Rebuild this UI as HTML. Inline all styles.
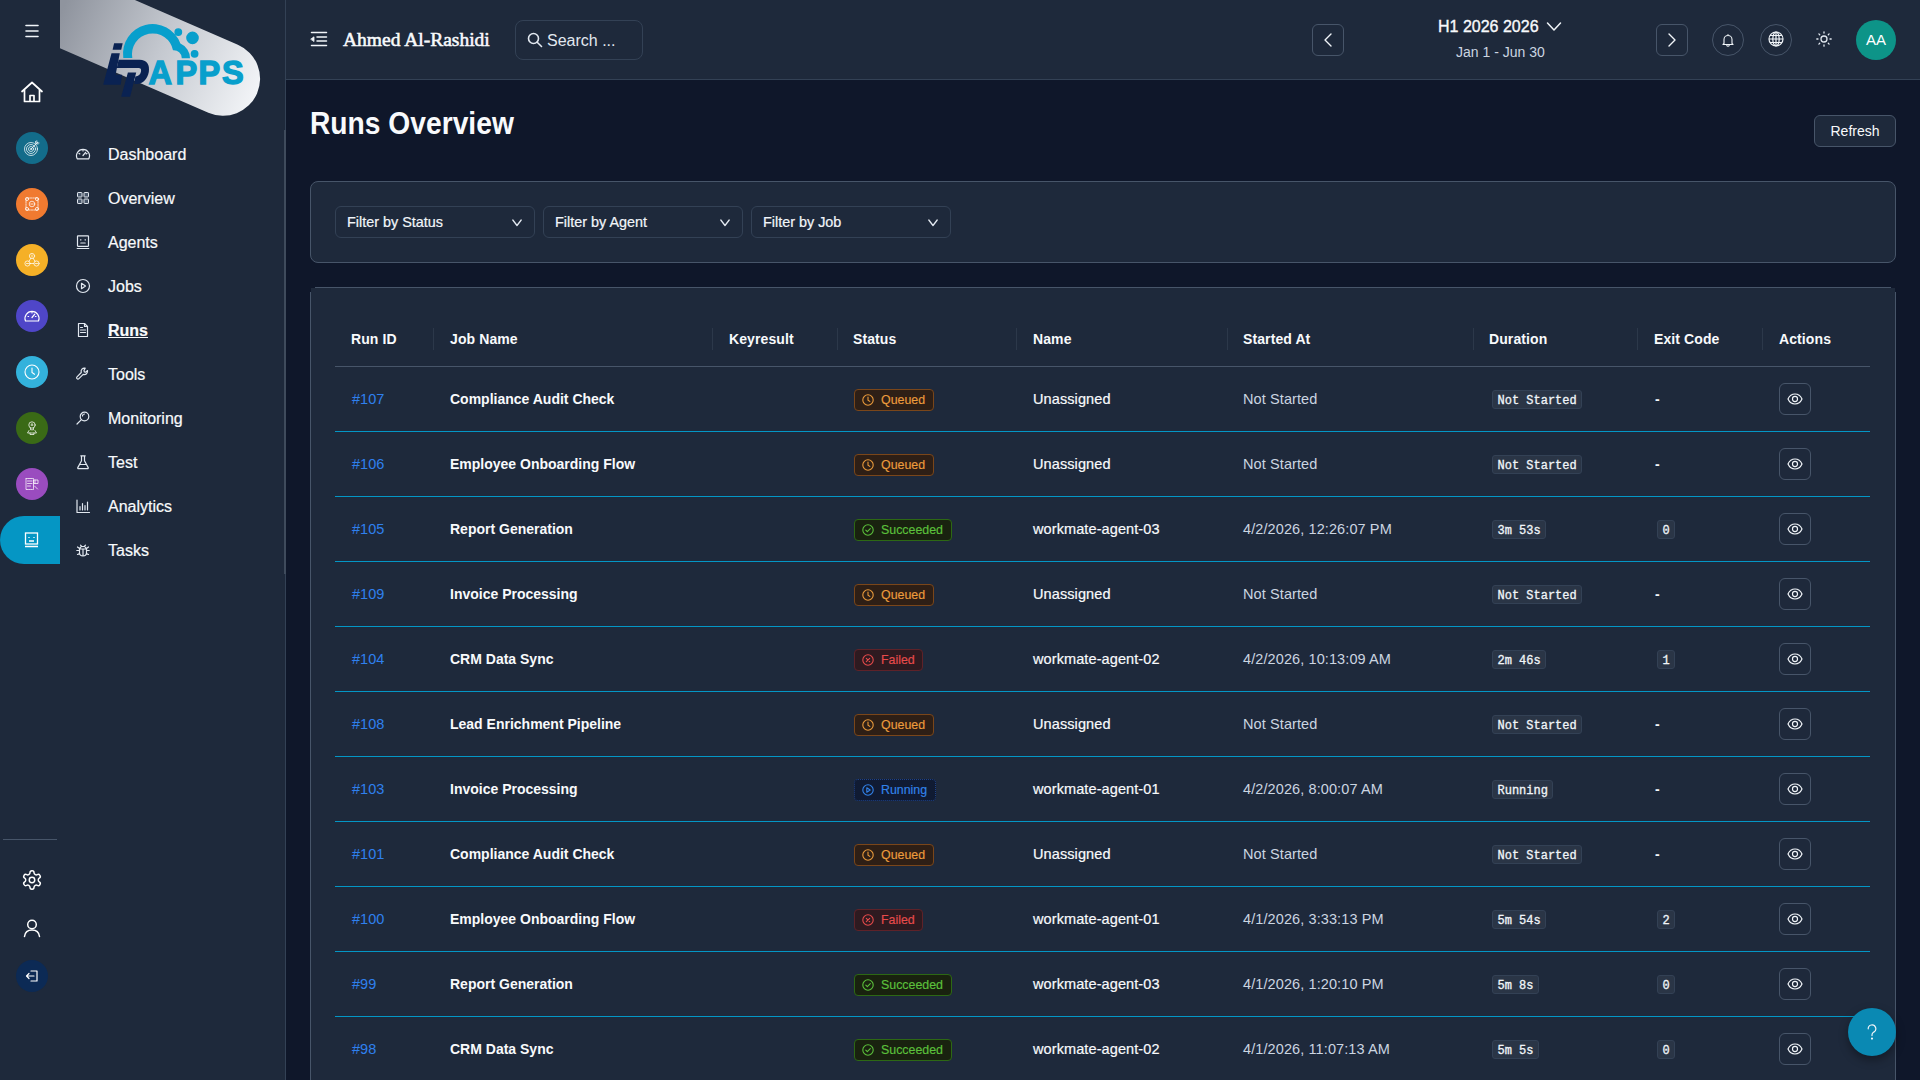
<!DOCTYPE html>
<html><head><meta charset="utf-8">
<style>
*{box-sizing:border-box;margin:0;padding:0}
html,body{width:1920px;height:1080px;overflow:hidden;background:#0f172a;font-family:"Liberation Sans",sans-serif;color:#f1f5f9}
.abs{position:absolute}
#rail{position:absolute;left:0;top:0;width:60px;height:1080px;background:#1e293b}
#side{position:absolute;left:60px;top:0;width:226px;height:1080px;background:#1e293b;border-right:1px solid #334155}
#hdr{position:absolute;left:286px;top:0;width:1634px;height:80px;background:#1e293b;border-bottom:1px solid #334155}
.circ{position:absolute;left:16px;width:32px;height:32px;border-radius:50%}
.circ svg{position:absolute;left:8px;top:8px}
.nav{position:absolute;left:108px;font-size:16px;line-height:22px;color:#f8fafc;-webkit-text-stroke:0.2px #f8fafc}
.navi{position:absolute;left:75px}
.btn32{position:absolute;width:32px;height:32px;border:1px solid #475569;border-radius:6px}
.card{position:absolute;background:#1e293b;border:1px solid #475569;border-radius:8px}
.sel{position:absolute;top:206px;width:200px;height:32px;border:1px solid #334155;border-radius:6px;background:#1e293b;font-size:14.4px;line-height:30px;padding-left:11px;color:#f1f5f9;-webkit-text-stroke:0.2px #f1f5f9}
.sel svg{position:absolute;right:10px;top:9px}
.th{position:absolute;top:330px;font-size:14px;font-weight:bold;line-height:18px;color:#f8fafc;letter-spacing:0.1px}
.sep{position:absolute;top:328px;width:1px;height:22px;background:#2c384a}
.row{position:absolute;left:335px;width:1535px;height:65px;border-bottom:1px solid #0396c5}
.c{position:absolute;top:23px;font-size:14px;line-height:18px;white-space:nowrap}
.rid{left:17px;color:#2f80ee;font-size:14.5px}
.job{left:115px;font-weight:bold;color:#f8fafc}
.nm{left:698px;color:#f8fafc;font-size:14.5px;letter-spacing:0.1px;-webkit-text-stroke:0.2px #f8fafc}
.st{left:908px;color:#cbd5e1;font-size:14.5px;letter-spacing:0.1px}
.badge{position:absolute;left:519px;top:22px;height:22px;border-radius:4px;border:1px solid;font-size:12.4px;line-height:20px;padding:0 7.5px 0 26px;-webkit-text-stroke:0.15px currentColor}
.badge svg{position:absolute;left:7px;top:4px}
.q{background:#2e1f16;border-color:#7a461a;color:#eb9b3c}
.s{background:#19220f;border-color:#2d6814;color:#5cc03c}
.f{background:#2e1a20;border-color:#5e2229;color:#e64b4b}
.r{background:#101b33;border-color:#1f4287;border-style:dotted;color:#3283ea}
.code{position:absolute;top:23px;height:19px;border-radius:3px;background:#2a3546;border:1px solid #334155;font-family:"Liberation Mono",monospace;font-size:12px;line-height:18px;padding:1px 4.5px 0;color:#f1f5f9;-webkit-text-stroke:0.3px #f1f5f9}
.dur{left:1157px}
.ex{left:1322px}
.dash{position:absolute;left:1320px;top:23px;font-size:14px;line-height:18px;font-weight:bold}
.eye{position:absolute;left:1444px;top:16px;width:32px;height:32px;border:1px solid #475569;border-radius:6px}
.eye svg{position:absolute;left:7px;top:7px}
</style></head>
<body>
<!-- rail -->
<div id="rail">
  <svg class="abs" style="left:24px;top:24px" width="16" height="14" viewBox="0 0 16 14"><path d="M2 1.5h12M2 7h12M2 12.5h12" stroke="#f1f5f9" stroke-width="1.6" stroke-linecap="round"/></svg>
  <svg class="abs" style="left:20px;top:80px" width="24" height="24" viewBox="0 0 24 24" fill="none" stroke="#fff" stroke-width="1.7" stroke-linejoin="round" stroke-linecap="round"><path d="M2 11.5L12 2.5l10 9M4.5 9.5V21.5h15V9.5M10 21.5v-6h4v6"/></svg>
  <div class="circ" style="top:132px;background:#136c8a"><svg style="left:7px;top:7px" width="18" height="18" viewBox="0 0 18 18" fill="none" stroke="#fff" stroke-opacity=".92" stroke-width="0.8" stroke-linecap="round" stroke-linejoin="round"><circle cx="8" cy="10" r="6.5"/><circle cx="8" cy="10" r="4.5"/><circle cx="8" cy="10" r="2.5"/><circle cx="8" cy="10" r=".6"/><path d="M8 10L14.5 3.5M12.5 2.5l.2 2.3 2.3.2M13.8 1.8l.1 2.1 2.1.1"/></svg></div>
  <div class="circ" style="top:188px;background:#f07a30"><svg style="left:7px;top:7px" width="18" height="18" viewBox="0 0 18 18" fill="none" stroke="#fff" stroke-opacity=".92" stroke-width="0.8" stroke-linecap="round" stroke-linejoin="round"><rect x="3" y="3" width="12" height="12" rx="1.5" stroke-dasharray="1.6 1"/><circle cx="9" cy="9" r="2.8"/><path d="M7.8 9h2.4"/><circle cx="4" cy="4" r="1.6"/><circle cx="14" cy="4" r="1.6"/><circle cx="4" cy="14" r="1.6"/><circle cx="14" cy="14" r="1.6"/></svg></div>
  <div class="circ" style="top:244px;background:#f5b027"><svg style="left:7px;top:7px" width="18" height="18" viewBox="0 0 18 18" fill="none" stroke="#fff" stroke-opacity=".92" stroke-width="0.8" stroke-linecap="round" stroke-linejoin="round"><circle cx="9" cy="5" r="2.6"/><circle cx="4.5" cy="12.5" r="2.6"/><circle cx="13.5" cy="12.5" r="2.6"/><path d="M7.1 12.5h3.8M7.8 7.3l-1.8 3M10.2 7.3l1.8 3M9 4v2M3.5 12.5h2M12.5 12.5h2"/></svg></div>
  <div class="circ" style="top:300px;background:#4f46c8"><svg style="left:7px;top:7px" width="18" height="18" viewBox="0 0 18 18" fill="none" stroke="#fff" stroke-width="1.2" stroke-linecap="round"><path d="M2.5 14A7 7 0 1 1 15.5 14z"/><path d="M9 10.5l2.8-3.3M5 9.5h.6M9 5.3v.6M12.4 9.5h.6"/></svg></div>
  <div class="circ" style="top:356px;background:#33b2dc"><svg style="left:7px;top:7px" width="18" height="18" viewBox="0 0 18 18" fill="none" stroke="#fff" stroke-width="1.1" stroke-linecap="round"><circle cx="9" cy="9" r="7"/><path d="M9 5v4.5l2.5 1.8"/></svg></div>
  <div class="circ" style="top:412px;background:#3a6a16"><svg style="left:7px;top:7px" width="18" height="18" viewBox="0 0 18 18" fill="none" stroke="#fff" stroke-opacity=".92" stroke-width="0.8" stroke-linecap="round" stroke-linejoin="round"><circle cx="9" cy="6" r="3.2"/><path d="M9 4.5v2M8 6h2M7.5 9v1.8h3V9M6 11.5l-1.5 2.5h9L12 11.5M7 14v1.5h4V14"/></svg></div>
  <div class="circ" style="top:468px;background:#9a4cbf"><svg style="left:7px;top:7px" width="18" height="18" viewBox="0 0 18 18" fill="none" stroke="#fff" stroke-opacity=".92" stroke-width="0.8" stroke-linecap="round" stroke-linejoin="round"><rect x="3" y="3.5" width="7.5" height="11" stroke-dasharray="1.4 .8"/><path d="M4.5 6h4.5M4.5 8.5h4.5M4.5 11h3M11 5h4v3.5h-4zM11.5 11l3 3M12 5v3.5"/></svg></div>
  <div class="abs" style="left:0;top:516px;width:60px;height:48px;background:#0596c4;border-radius:24px 0 0 24px"><svg class="abs" style="left:24px;top:16px" width="15" height="16" viewBox="0 0 15 16" fill="none" stroke="#fff" stroke-width="1.3"><rect x="1.5" y="1" width="12" height="11"/><path d="M5 5v1M10 5v1M5 9h5M1 14.5h13"/></svg></div>
  <div class="abs" style="left:3px;top:839px;width:54px;height:1px;background:#475569"></div>
  <svg class="abs" style="left:21px;top:869px" width="22" height="22" viewBox="0 0 24 24" fill="none" stroke="#fff" stroke-width="1.6" stroke-linecap="round" stroke-linejoin="round"><path d="M12.22 2h-.44a2 2 0 0 0-2 2v.18a2 2 0 0 1-1 1.73l-.43.25a2 2 0 0 1-2 0l-.15-.08a2 2 0 0 0-2.73.73l-.22.38a2 2 0 0 0 .73 2.73l.15.1a2 2 0 0 1 1 1.72v.51a2 2 0 0 1-1 1.74l-.15.09a2 2 0 0 0-.73 2.73l.22.38a2 2 0 0 0 2.73.73l.15-.08a2 2 0 0 1 2 0l.43.25a2 2 0 0 1 1 1.73V20a2 2 0 0 0 2 2h.44a2 2 0 0 0 2-2v-.18a2 2 0 0 1 1-1.73l.43-.25a2 2 0 0 1 2 0l.15.08a2 2 0 0 0 2.73-.73l.22-.39a2 2 0 0 0-.73-2.73l-.15-.08a2 2 0 0 1-1-1.74v-.5a2 2 0 0 1 1-1.74l.15-.09a2 2 0 0 0 .73-2.73l-.22-.38a2 2 0 0 0-2.73-.73l-.15.08a2 2 0 0 1-2 0l-.43-.25a2 2 0 0 1-1-1.73V4a2 2 0 0 0-2-2z"/><circle cx="12" cy="12" r="3"/></svg>
  <svg class="abs" style="left:22px;top:918px" width="20" height="20" viewBox="0 0 20 20" fill="none" stroke="#fff" stroke-width="1.5" stroke-linecap="round"><circle cx="10" cy="6.5" r="4.3"/><path d="M2.5 18.5c.5-4 3.5-6.5 7.5-6.5s7 2.5 7.5 6.5"/></svg>
  <div class="abs" style="left:16px;top:960px;width:32px;height:32px;border-radius:50%;background:#0c2a55"><svg class="abs" style="left:9px;top:9px" width="14" height="14" viewBox="0 0 14 14" fill="none" stroke="#fff" stroke-width="1.2" stroke-linecap="round" stroke-linejoin="round"><path d="M6 2h6v10H6M9 7H1.5M4 4.5L1.5 7 4 9.5"/></svg></div>
</div>
<!-- sidebar -->
<div id="side"></div>
<div class="abs" style="left:284px;top:130px;width:2px;height:444px;background:#3f4b5c"></div>
<svg class="abs" style="left:0;top:0" width="286" height="130" viewBox="0 0 286 130">
<defs>
<clipPath id="lc"><rect x="60" y="0" width="226" height="130"/></clipPath>
<linearGradient id="lg" gradientUnits="userSpaceOnUse" x1="-175" y1="0" x2="37" y2="0">
<stop offset="0" stop-color="#8f949e"/><stop offset="0.5" stop-color="#c4c8cf"/><stop offset="1" stop-color="#f2f4f7"/>
</linearGradient>
</defs>
<g clip-path="url(#lc)">
<g transform="translate(223.1,78.7) rotate(23.5)"><path d="M-400,-37 H0 A37,37 0 0 1 0,37 H-400 Z" fill="url(#lg)"/></g>
</g>
<path fill="#089fcc" d="M123.3,57.9 A29.6 29.6 0 0 1 180.4,43.5 A16.2 16.2 0 0 1 190,58.3 L181.8,58.3 A8 8 0 0 0 173,50.3 A20.7 20.7 0 1 0 132.3,58 Z"/>
<g fill="#089fcc" stroke="#089fcc" stroke-width="1.4">
<circle cx="178.3" cy="32.1" r="3.2"/><circle cx="192.5" cy="37.9" r="5.6"/><circle cx="194.6" cy="53.8" r="3.2"/>
<text x="148.5" y="83.5" font-family="Liberation Sans" font-weight="bold" font-size="32.5">A</text>
<text x="175.5" y="83.5" font-family="Liberation Sans" font-weight="bold" font-size="32.5">P</text>
<text x="198.5" y="83.5" font-family="Liberation Sans" font-weight="bold" font-size="32.5">P</text>
<text x="222" y="83.5" font-family="Liberation Sans" font-weight="bold" font-size="32.5">S</text>
</g>
<g fill="#0a2252">
<path d="M114.1,43.2 L122.7,43.2 L121.2,49.8 L112.6,49.8 Z"/>
<path d="M111.5,53.2 L119.8,53.2 L115.6,74.7 L122.1,74.7 L120.7,84.8 L103.2,84.8 Z"/>
<path d="M118.6,59.8 L139.5,59.8 C147,59.8 150,65 148.8,72 C147.5,79 143,83.9 137,83.9 L134.3,83.9 L135.3,76.4 C138.5,76.4 140.5,74.5 141,71.5 C141.5,69 140.5,68.1 138.5,68.1 L116.8,68.1 Z"/>
<path d="M127.9,72.4 L136.2,72.4 L130.1,96.8 L121.2,96.8 Z"/>
</g>
</svg>
<div class="abs" style="left:75px;top:146px"><svg width="16" height="16" viewBox="0 0 16 16" fill="none" stroke="#e2e8f0" stroke-width="1.2" stroke-linecap="round" stroke-linejoin="round"><path d="M2.2 12.8A6.5 6.5 0 1 1 13.8 12.8Z"/><path d="M8 9.5l2.6-3.2M4 7.5l.8.4M8 4v.9M12 7.5l-.8.4"/></svg></div>
<div class="abs" style="left:75px;top:190px"><svg width="16" height="16" viewBox="0 0 16 16" fill="#64748b" fill-opacity=".6" stroke="#e2e8f0" stroke-width="1"><rect x="2.5" y="2.5" width="4.5" height="4.5" rx=".6"/><rect x="9" y="2.5" width="4.5" height="4.5" rx=".6"/><rect x="2.5" y="9" width="4.5" height="4.5" rx=".6"/><rect x="9" y="9" width="4.5" height="4.5" rx=".6"/></svg></div>
<div class="abs" style="left:75px;top:234px"><svg width="16" height="16" viewBox="0 0 16 16" fill="none" stroke="#e2e8f0" stroke-width="1.2" stroke-linecap="round" stroke-linejoin="round"><rect x="2.5" y="1.8" width="11" height="10.5" rx=".5"/><path d="M5.8 5.5v.6M10.2 5.5v.6M5.8 9h4.4M2.2 14.5h11.6"/></svg></div>
<div class="abs" style="left:75px;top:278px"><svg width="16" height="16" viewBox="0 0 16 16" fill="none" stroke="#e2e8f0" stroke-width="1.2" stroke-linecap="round" stroke-linejoin="round"><circle cx="8" cy="8" r="6.5"/><path d="M6.5 5.3v5.4L10.5 8z"/></svg></div>
<div class="abs" style="left:75px;top:322px"><svg width="16" height="16" viewBox="0 0 16 16" fill="none" stroke="#e2e8f0" stroke-width="1.2" stroke-linecap="round" stroke-linejoin="round"><path d="M3.5 1.5h6l3 3v10h-9z"/><path d="M9.5 1.5v3h3M5.5 8h5M5.5 10.5h5M5.5 5.5h2"/></svg></div>
<div class="abs" style="left:75px;top:366px"><svg width="16" height="16" viewBox="0 0 16 16" fill="none" stroke="#e2e8f0" stroke-width="1.2" stroke-linecap="round" stroke-linejoin="round"><path d="M10.2 2.2a3.3 3.3 0 0 0-3.9 4.3L2 10.8a1.3 1.3 0 0 0 1.9 1.9L8.2 8.4a3.3 3.3 0 0 0 4.3-3.9L10.8 6.2 9.3 5.9 9 4.4z"/></svg></div>
<div class="abs" style="left:75px;top:410px"><svg width="16" height="16" viewBox="0 0 16 16" fill="none" stroke="#e2e8f0" stroke-width="1.2" stroke-linecap="round" stroke-linejoin="round"><circle cx="9.5" cy="6.5" r="4.3"/><path d="M6.4 9.6L2 14"/><path d="M7.5 6a2 2 0 0 1 2-2"/></svg></div>
<div class="abs" style="left:75px;top:454px"><svg width="16" height="16" viewBox="0 0 16 16" fill="none" stroke="#e2e8f0" stroke-width="1.2" stroke-linecap="round" stroke-linejoin="round"><path d="M5.8 1.8h4.4M6.5 1.8v5L2.8 13.6c-.3.6.1 1.1.7 1.1h9c.6 0 1-.5.7-1.1L9.5 6.8v-5M4.5 10.5h7"/></svg></div>
<div class="abs" style="left:75px;top:498px"><svg width="16" height="16" viewBox="0 0 16 16" fill="none" stroke="#e2e8f0" stroke-width="1.2" stroke-linecap="round" stroke-linejoin="round"><path d="M2 2v12.5h12.5M5 12V8.5M7.5 12V5.5M10 12V7.5M12.5 12V4"/></svg></div>
<div class="abs" style="left:75px;top:542px"><svg width="16" height="16" viewBox="0 0 16 16" fill="none" stroke="#e2e8f0" stroke-width="1.2" stroke-linecap="round" stroke-linejoin="round"><path d="M5.5 3.2l1.2 1.3M10.5 3.2L9.3 4.5M5 6.5c0-1.3 1.3-2 3-2s3 .7 3 2M4.5 7h7v3.5a3.5 3.5 0 0 1-7 0zM8 7v7M1.8 8.5h2.7M11.5 8.5h2.7M2.5 12.5l2.2-1M13.5 12.5l-2.2-1M2.5 5l2 1.5M13.5 5l-2 1.5"/></svg></div>
<div class="nav" style="top:144px">Dashboard</div>
<div class="nav" style="top:188px">Overview</div>
<div class="nav" style="top:232px">Agents</div>
<div class="nav" style="top:276px">Jobs</div>
<div class="nav" style="top:320px;font-weight:bold;text-decoration:underline">Runs</div>
<div class="nav" style="top:364px">Tools</div>
<div class="nav" style="top:408px">Monitoring</div>
<div class="nav" style="top:452px">Test</div>
<div class="nav" style="top:496px">Analytics</div>
<div class="nav" style="top:540px">Tasks</div>

<!-- header -->
<div id="hdr"></div>
<div class="abs" style="left:343px;top:28.5px;font-family:'Liberation Serif',serif;font-size:19.5px;line-height:22px;color:#f8fafc;-webkit-text-stroke:0.55px #f8fafc">Ahmed Al-Rashidi</div>
<div class="abs" style="left:515px;top:20px;width:128px;height:40px;border:1px solid #334155;border-radius:8px"></div>
<div class="abs" style="left:547px;top:31px;font-size:16px;line-height:20px;color:#e2e8f0">Search ...</div>
<div class="btn32" style="left:1312px;top:24px"></div>
<div class="abs" style="left:1438px;top:18px;font-size:16px;line-height:18px;color:#f8fafc;-webkit-text-stroke:0.35px #f8fafc">H1 2026 2026</div>
<div class="abs" style="left:1456px;top:44px;font-size:14px;line-height:16px;color:#cbd5e1">Jan 1 - Jun 30</div>
<div class="btn32" style="left:1656px;top:24px"></div>
<div class="btn32" style="left:1712px;top:24px;border-radius:50%"></div>
<div class="btn32" style="left:1760px;top:24px;border-radius:50%"></div>
<div class="abs" style="left:1856px;top:20px;width:40px;height:40px;border-radius:50%;background:#0d9488;color:#fff;font-size:15px;line-height:40px;text-align:center">AA</div>

<svg class="abs" style="left:310px;top:31px" width="18" height="16" viewBox="0 0 18 16" fill="none" stroke="#f1f5f9" stroke-width="1.5" stroke-linecap="round"><path d="M1.5 1.5h15M7 6h9.5M7 10h9.5M1.5 14.5h15"/><path d="M1 8l3-2.2v4.4z" fill="#f1f5f9" stroke-width="0.8" stroke-linejoin="round"/></svg>
<svg class="abs" style="left:527px;top:32px" width="16" height="16" viewBox="0 0 16 16" fill="none" stroke="#e2e8f0" stroke-width="1.6" stroke-linecap="round"><circle cx="6.5" cy="6.5" r="5"/><path d="M10.2 10.2L14.5 14.5"/></svg>
<svg class="abs" style="left:1320px;top:32px" width="16" height="16" viewBox="0 0 16 16" fill="none" stroke="#f1f5f9" stroke-width="1.4" stroke-linecap="round" stroke-linejoin="round"><path d="M11 2L5 8l6 6"/></svg>
<svg class="abs" style="left:1664px;top:32px" width="16" height="16" viewBox="0 0 16 16" fill="none" stroke="#f1f5f9" stroke-width="1.4" stroke-linecap="round" stroke-linejoin="round"><path d="M5 2l6 6-6 6"/></svg>
<svg class="abs" style="left:1546px;top:20px" width="16" height="14" viewBox="0 0 16 14" fill="none" stroke="#f1f5f9" stroke-width="1.5" stroke-linecap="round" stroke-linejoin="round"><path d="M1.5 3l6.5 7 6.5-7"/></svg>
<svg class="abs" style="left:1721px;top:33px" width="14" height="14" viewBox="0 0 14 14" fill="none" stroke="#f1f5f9" stroke-width="1.1" stroke-linecap="round" stroke-linejoin="round"><path d="M3 10.5V6.5a4 4 0 0 1 8 0v4l1 1H2zM5.8 12.5a1.3 1.3 0 0 0 2.4 0M7 1.5v1"/></svg>
<svg class="abs" style="left:1768px;top:31px" width="16" height="16" viewBox="0 0 16 16" fill="none" stroke="#f1f5f9" stroke-width="1.2"><circle cx="8" cy="8" r="7"/><ellipse cx="8" cy="8" rx="3.2" ry="7"/><path d="M1 8h14M8 1v14M2 4.5h12M2 11.5h12"/></svg>
<svg class="abs" style="left:1816px;top:31px" width="16" height="16" viewBox="0 0 16 16" fill="none" stroke="#e2e8f0" stroke-width="1.3" stroke-linecap="round"><circle cx="8" cy="8" r="3"/><path d="M8 .8v1.2M8 14v1.2M.8 8H2M14 8h1.2M2.9 2.9l.8.8M12.3 12.3l.8.8M2.9 13.1l.8-.8M12.3 3.7l.8-.8"/></svg>
<!-- main -->
<div class="abs" style="left:310px;top:103px;font-size:30.5px;font-weight:bold;line-height:40px;color:#f8fafc;transform:scaleX(0.925);transform-origin:0 0;white-space:nowrap">Runs Overview</div>
<div class="abs" style="left:1814px;top:115px;width:82px;height:32px;border:1px solid #475569;border-radius:6px;background:#1e293b;font-size:14px;line-height:30px;text-align:center;color:#f8fafc">Refresh</div>

<div class="card" style="left:310px;top:181px;width:1586px;height:82px"></div>
<div class="sel" style="left:335px">Filter by Status<svg width="14" height="14" viewBox="0 0 14 14" fill="none" stroke="#e2e8f0" stroke-width="1.3" stroke-linecap="round" stroke-linejoin="round"><path d="M2.8 4l4.2 5.5 4.2-5.5"/></svg></div>
<div class="sel" style="left:543px">Filter by Agent<svg width="14" height="14" viewBox="0 0 14 14" fill="none" stroke="#e2e8f0" stroke-width="1.3" stroke-linecap="round" stroke-linejoin="round"><path d="M2.8 4l4.2 5.5 4.2-5.5"/></svg></div>
<div class="sel" style="left:751px">Filter by Job<svg width="14" height="14" viewBox="0 0 14 14" fill="none" stroke="#e2e8f0" stroke-width="1.3" stroke-linecap="round" stroke-linejoin="round"><path d="M2.8 4l4.2 5.5 4.2-5.5"/></svg></div>

<div class="card" style="left:310px;top:287px;width:1586px;height:900px;border-top-left-radius:0;border-top-right-radius:0"></div>
<div class="abs" style="left:310px;top:287px;width:5px;height:1px;background:#0f172a"></div><div class="abs" style="left:310px;top:287px;width:1px;height:5px;background:#0f172a"></div><div class="abs" style="left:1891px;top:287px;width:5px;height:1px;background:#0f172a"></div><div class="abs" style="left:1895px;top:287px;width:1px;height:5px;background:#0f172a"></div>
<div class="abs" style="left:335px;top:366px;width:1535px;height:1px;background:#475569"></div>
<div class="th" style="left:351px">Run ID</div>
<div class="th" style="left:450px">Job Name</div>
<div class="th" style="left:729px">Keyresult</div>
<div class="th" style="left:853px">Status</div>
<div class="th" style="left:1033px">Name</div>
<div class="th" style="left:1243px">Started At</div>
<div class="th" style="left:1489px">Duration</div>
<div class="th" style="left:1654px">Exit Code</div>
<div class="th" style="left:1779px">Actions</div>
<div class="sep" style="left:433px"></div>
<div class="sep" style="left:712px"></div>
<div class="sep" style="left:837px"></div>
<div class="sep" style="left:1016px"></div>
<div class="sep" style="left:1227px"></div>
<div class="sep" style="left:1473px"></div>
<div class="sep" style="left:1637px"></div>
<div class="sep" style="left:1762px"></div>

<div id="rows">
<div class="row" style="top:367px"><div class="c rid">#107</div><div class="c job">Compliance Audit Check</div><div class="badge q"><svg width="12" height="12" viewBox="0 0 12 12" fill="none" stroke="currentColor" stroke-width="1.1"><circle cx="6" cy="6" r="5.2"/><path d="M6 3v3.2l1.8 1.2" stroke-linecap="round"/></svg>Queued</div><div class="c nm">Unassigned</div><div class="c st">Not Started</div><div class="code dur">Not Started</div><div class="dash">-</div><div class="eye"><svg width="16" height="16" viewBox="0 0 24 24" fill="none" stroke="#f1f5f9" stroke-width="1.8" stroke-linecap="round" stroke-linejoin="round"><path d="M1.5 12C6 2 18 2 22.5 12 18 22 6 22 1.5 12z"/><circle cx="12" cy="12" r="3.8"/></svg></div></div>
<div class="row" style="top:432px"><div class="c rid">#106</div><div class="c job">Employee Onboarding Flow</div><div class="badge q"><svg width="12" height="12" viewBox="0 0 12 12" fill="none" stroke="currentColor" stroke-width="1.1"><circle cx="6" cy="6" r="5.2"/><path d="M6 3v3.2l1.8 1.2" stroke-linecap="round"/></svg>Queued</div><div class="c nm">Unassigned</div><div class="c st">Not Started</div><div class="code dur">Not Started</div><div class="dash">-</div><div class="eye"><svg width="16" height="16" viewBox="0 0 24 24" fill="none" stroke="#f1f5f9" stroke-width="1.8" stroke-linecap="round" stroke-linejoin="round"><path d="M1.5 12C6 2 18 2 22.5 12 18 22 6 22 1.5 12z"/><circle cx="12" cy="12" r="3.8"/></svg></div></div>
<div class="row" style="top:497px"><div class="c rid">#105</div><div class="c job">Report Generation</div><div class="badge s"><svg width="12" height="12" viewBox="0 0 12 12" fill="none" stroke="currentColor" stroke-width="1.1"><circle cx="6" cy="6" r="5.2"/><path d="M3.8 6.2l1.5 1.5 3-3" stroke-linecap="round" stroke-linejoin="round"/></svg>Succeeded</div><div class="c nm">workmate-agent-03</div><div class="c st">4/2/2026, 12:26:07 PM</div><div class="code dur">3m 53s</div><div class="code ex">0</div><div class="eye"><svg width="16" height="16" viewBox="0 0 24 24" fill="none" stroke="#f1f5f9" stroke-width="1.8" stroke-linecap="round" stroke-linejoin="round"><path d="M1.5 12C6 2 18 2 22.5 12 18 22 6 22 1.5 12z"/><circle cx="12" cy="12" r="3.8"/></svg></div></div>
<div class="row" style="top:562px"><div class="c rid">#109</div><div class="c job">Invoice Processing</div><div class="badge q"><svg width="12" height="12" viewBox="0 0 12 12" fill="none" stroke="currentColor" stroke-width="1.1"><circle cx="6" cy="6" r="5.2"/><path d="M6 3v3.2l1.8 1.2" stroke-linecap="round"/></svg>Queued</div><div class="c nm">Unassigned</div><div class="c st">Not Started</div><div class="code dur">Not Started</div><div class="dash">-</div><div class="eye"><svg width="16" height="16" viewBox="0 0 24 24" fill="none" stroke="#f1f5f9" stroke-width="1.8" stroke-linecap="round" stroke-linejoin="round"><path d="M1.5 12C6 2 18 2 22.5 12 18 22 6 22 1.5 12z"/><circle cx="12" cy="12" r="3.8"/></svg></div></div>
<div class="row" style="top:627px"><div class="c rid">#104</div><div class="c job">CRM Data Sync</div><div class="badge f"><svg width="12" height="12" viewBox="0 0 12 12" fill="none" stroke="currentColor" stroke-width="1.1"><circle cx="6" cy="6" r="5.2"/><path d="M4.3 4.3l3.4 3.4M7.7 4.3l-3.4 3.4" stroke-linecap="round"/></svg>Failed</div><div class="c nm">workmate-agent-02</div><div class="c st">4/2/2026, 10:13:09 AM</div><div class="code dur">2m 46s</div><div class="code ex">1</div><div class="eye"><svg width="16" height="16" viewBox="0 0 24 24" fill="none" stroke="#f1f5f9" stroke-width="1.8" stroke-linecap="round" stroke-linejoin="round"><path d="M1.5 12C6 2 18 2 22.5 12 18 22 6 22 1.5 12z"/><circle cx="12" cy="12" r="3.8"/></svg></div></div>
<div class="row" style="top:692px"><div class="c rid">#108</div><div class="c job">Lead Enrichment Pipeline</div><div class="badge q"><svg width="12" height="12" viewBox="0 0 12 12" fill="none" stroke="currentColor" stroke-width="1.1"><circle cx="6" cy="6" r="5.2"/><path d="M6 3v3.2l1.8 1.2" stroke-linecap="round"/></svg>Queued</div><div class="c nm">Unassigned</div><div class="c st">Not Started</div><div class="code dur">Not Started</div><div class="dash">-</div><div class="eye"><svg width="16" height="16" viewBox="0 0 24 24" fill="none" stroke="#f1f5f9" stroke-width="1.8" stroke-linecap="round" stroke-linejoin="round"><path d="M1.5 12C6 2 18 2 22.5 12 18 22 6 22 1.5 12z"/><circle cx="12" cy="12" r="3.8"/></svg></div></div>
<div class="row" style="top:757px"><div class="c rid">#103</div><div class="c job">Invoice Processing</div><div class="badge r"><svg width="12" height="12" viewBox="0 0 12 12" fill="none" stroke="currentColor" stroke-width="1.1"><circle cx="6" cy="6" r="5.2"/><path d="M4.8 3.8v4.4L8.2 6z" stroke-linejoin="round"/></svg>Running</div><div class="c nm">workmate-agent-01</div><div class="c st">4/2/2026, 8:00:07 AM</div><div class="code dur">Running</div><div class="dash">-</div><div class="eye"><svg width="16" height="16" viewBox="0 0 24 24" fill="none" stroke="#f1f5f9" stroke-width="1.8" stroke-linecap="round" stroke-linejoin="round"><path d="M1.5 12C6 2 18 2 22.5 12 18 22 6 22 1.5 12z"/><circle cx="12" cy="12" r="3.8"/></svg></div></div>
<div class="row" style="top:822px"><div class="c rid">#101</div><div class="c job">Compliance Audit Check</div><div class="badge q"><svg width="12" height="12" viewBox="0 0 12 12" fill="none" stroke="currentColor" stroke-width="1.1"><circle cx="6" cy="6" r="5.2"/><path d="M6 3v3.2l1.8 1.2" stroke-linecap="round"/></svg>Queued</div><div class="c nm">Unassigned</div><div class="c st">Not Started</div><div class="code dur">Not Started</div><div class="dash">-</div><div class="eye"><svg width="16" height="16" viewBox="0 0 24 24" fill="none" stroke="#f1f5f9" stroke-width="1.8" stroke-linecap="round" stroke-linejoin="round"><path d="M1.5 12C6 2 18 2 22.5 12 18 22 6 22 1.5 12z"/><circle cx="12" cy="12" r="3.8"/></svg></div></div>
<div class="row" style="top:887px"><div class="c rid">#100</div><div class="c job">Employee Onboarding Flow</div><div class="badge f"><svg width="12" height="12" viewBox="0 0 12 12" fill="none" stroke="currentColor" stroke-width="1.1"><circle cx="6" cy="6" r="5.2"/><path d="M4.3 4.3l3.4 3.4M7.7 4.3l-3.4 3.4" stroke-linecap="round"/></svg>Failed</div><div class="c nm">workmate-agent-01</div><div class="c st">4/1/2026, 3:33:13 PM</div><div class="code dur">5m 54s</div><div class="code ex">2</div><div class="eye"><svg width="16" height="16" viewBox="0 0 24 24" fill="none" stroke="#f1f5f9" stroke-width="1.8" stroke-linecap="round" stroke-linejoin="round"><path d="M1.5 12C6 2 18 2 22.5 12 18 22 6 22 1.5 12z"/><circle cx="12" cy="12" r="3.8"/></svg></div></div>
<div class="row" style="top:952px"><div class="c rid">#99</div><div class="c job">Report Generation</div><div class="badge s"><svg width="12" height="12" viewBox="0 0 12 12" fill="none" stroke="currentColor" stroke-width="1.1"><circle cx="6" cy="6" r="5.2"/><path d="M3.8 6.2l1.5 1.5 3-3" stroke-linecap="round" stroke-linejoin="round"/></svg>Succeeded</div><div class="c nm">workmate-agent-03</div><div class="c st">4/1/2026, 1:20:10 PM</div><div class="code dur">5m 8s</div><div class="code ex">0</div><div class="eye"><svg width="16" height="16" viewBox="0 0 24 24" fill="none" stroke="#f1f5f9" stroke-width="1.8" stroke-linecap="round" stroke-linejoin="round"><path d="M1.5 12C6 2 18 2 22.5 12 18 22 6 22 1.5 12z"/><circle cx="12" cy="12" r="3.8"/></svg></div></div>
<div class="row" style="top:1017px"><div class="c rid">#98</div><div class="c job">CRM Data Sync</div><div class="badge s"><svg width="12" height="12" viewBox="0 0 12 12" fill="none" stroke="currentColor" stroke-width="1.1"><circle cx="6" cy="6" r="5.2"/><path d="M3.8 6.2l1.5 1.5 3-3" stroke-linecap="round" stroke-linejoin="round"/></svg>Succeeded</div><div class="c nm">workmate-agent-02</div><div class="c st">4/1/2026, 11:07:13 AM</div><div class="code dur">5m 5s</div><div class="code ex">0</div><div class="eye"><svg width="16" height="16" viewBox="0 0 24 24" fill="none" stroke="#f1f5f9" stroke-width="1.8" stroke-linecap="round" stroke-linejoin="round"><path d="M1.5 12C6 2 18 2 22.5 12 18 22 6 22 1.5 12z"/><circle cx="12" cy="12" r="3.8"/></svg></div></div>
</div>

<div class="abs" style="left:1848px;top:1008px;width:48px;height:48px;border-radius:50%;background:#0a89b3;box-shadow:0 4px 10px rgba(0,0,0,.35)"><svg class="abs" style="left:17px;top:16px" width="14" height="17" viewBox="0 0 14 17" fill="none" stroke="#f1f5f9" stroke-width="1.2" stroke-linecap="round"><path d="M3.2 4.8a3.8 3.8 0 1 1 5.6 3.3c-1.2.7-1.8 1.4-1.8 2.7v.8"/><circle cx="7" cy="14.6" r=".5" fill="#f1f5f9"/></svg></div>
</body></html>
